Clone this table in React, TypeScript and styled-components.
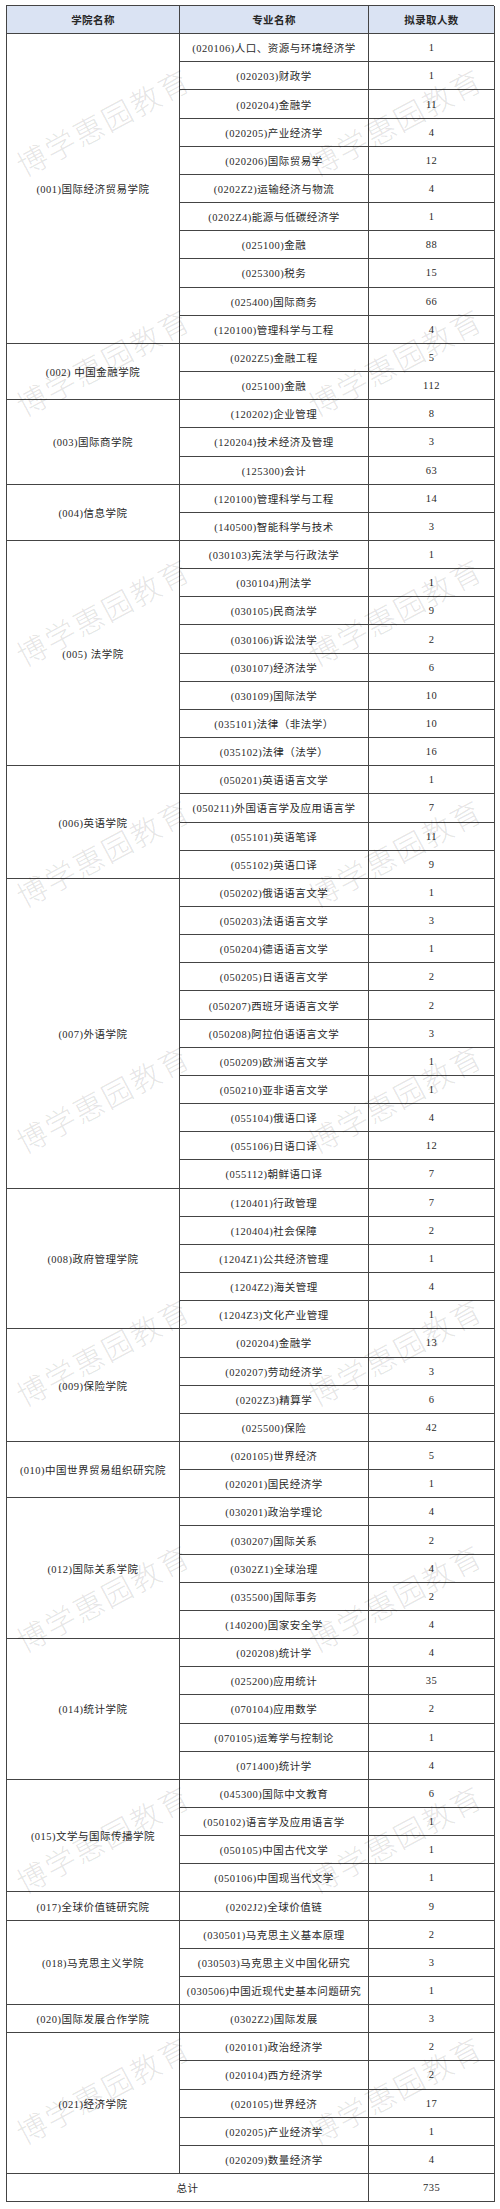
import React from 'react';
import styled, { createGlobalStyle } from 'styled-components';

const GlobalStyle = createGlobalStyle`
  html, body { margin: 0; padding: 0; background: #ffffff; }
  body { font-family: "Liberation Serif", "Noto Sans CJK SC", serif; }
`;

const Page = styled.div`
  padding: 5px 6px 0 6px;
  width: 500px;
  box-sizing: border-box;
`;

const Frame = styled.div`
  position: relative;
`;

const Grid = styled.div`
  display: grid;
  grid-template-columns: 173px 189px 126px;
  grid-auto-rows: 28.16px;
  border-top: 1px solid #444444;
  border-left: 1px solid #444444;
`;

const Cell = styled.div<{ $rows?: number; $cols?: number }>`
  grid-row: span ${(p) => p.$rows ?? 1};
  grid-column: span ${(p) => p.$cols ?? 1};
  box-sizing: border-box;
  border-right: 1px solid #444444;
  border-bottom: 1px solid #444444;
  display: flex;
  align-items: center;
  justify-content: center;
  font-family: "Liberation Serif", "Noto Sans CJK SC", serif;
  font-size: 10.5px;
  letter-spacing: 0.5px;
  color: #2a2a2a;
  white-space: nowrap;
`;

const HeadCell = styled(Cell)`
  background: #dae3f3;
  font-family: "Noto Sans CJK SC", sans-serif;
  font-weight: 700;
  color: #262626;
  letter-spacing: 0.4px;
`;

const Overlay = styled.div`
  position: absolute;
  inset: 0;
  pointer-events: none;
  overflow: hidden;
`;

const Watermark = styled.div<{ $x: number; $y: number }>`
  position: absolute;
  left: ${(p) => p.$x}px;
  top: ${(p) => p.$y}px;
  transform: translate(-50%, -50%) rotate(-28deg);
  font-family: "Noto Sans CJK SC", sans-serif;
  font-weight: 300;
  font-size: 30px;
  letter-spacing: 2px;
  color: rgba(0, 0, 0, 0.11);
  white-space: nowrap;
`;

type Major = [string, number];
interface Group {
  college: string;
  majors: Major[];
}

const groups: Group[] = [
  {
    college: '(001)国际经济贸易学院',
    majors: [
      ['(020106)人口、资源与环境经济学', 1],
      ['(020203)财政学', 1],
      ['(020204)金融学', 11],
      ['(020205)产业经济学', 4],
      ['(020206)国际贸易学', 12],
      ['(0202Z2)运输经济与物流', 4],
      ['(0202Z4)能源与低碳经济学', 1],
      ['(025100)金融', 88],
      ['(025300)税务', 15],
      ['(025400)国际商务', 66],
      ['(120100)管理科学与工程', 4],
    ],
  },
  {
    college: '(002) 中国金融学院',
    majors: [
      ['(0202Z5)金融工程', 5],
      ['(025100)金融', 112],
    ],
  },
  {
    college: '(003)国际商学院',
    majors: [
      ['(120202)企业管理', 8],
      ['(120204)技术经济及管理', 3],
      ['(125300)会计', 63],
    ],
  },
  {
    college: '(004)信息学院',
    majors: [
      ['(120100)管理科学与工程', 14],
      ['(140500)智能科学与技术', 3],
    ],
  },
  {
    college: '(005) 法学院',
    majors: [
      ['(030103)宪法学与行政法学', 1],
      ['(030104)刑法学', 1],
      ['(030105)民商法学', 9],
      ['(030106)诉讼法学', 2],
      ['(030107)经济法学', 6],
      ['(030109)国际法学', 10],
      ['(035101)法律（非法学）', 10],
      ['(035102)法律（法学）', 16],
    ],
  },
  {
    college: '(006)英语学院',
    majors: [
      ['(050201)英语语言文学', 1],
      ['(050211)外国语言学及应用语言学', 7],
      ['(055101)英语笔译', 11],
      ['(055102)英语口译', 9],
    ],
  },
  {
    college: '(007)外语学院',
    majors: [
      ['(050202)俄语语言文学', 1],
      ['(050203)法语语言文学', 3],
      ['(050204)德语语言文学', 1],
      ['(050205)日语语言文学', 2],
      ['(050207)西班牙语语言文学', 2],
      ['(050208)阿拉伯语语言文学', 3],
      ['(050209)欧洲语言文学', 1],
      ['(050210)亚非语言文学', 1],
      ['(055104)俄语口译', 4],
      ['(055106)日语口译', 12],
      ['(055112)朝鲜语口译', 7],
    ],
  },
  {
    college: '(008)政府管理学院',
    majors: [
      ['(120401)行政管理', 7],
      ['(120404)社会保障', 2],
      ['(1204Z1)公共经济管理', 1],
      ['(1204Z2)海关管理', 4],
      ['(1204Z3)文化产业管理', 1],
    ],
  },
  {
    college: '(009)保险学院',
    majors: [
      ['(020204)金融学', 13],
      ['(020207)劳动经济学', 3],
      ['(0202Z3)精算学', 6],
      ['(025500)保险', 42],
    ],
  },
  {
    college: '(010)中国世界贸易组织研究院',
    majors: [
      ['(020105)世界经济', 5],
      ['(020201)国民经济学', 1],
    ],
  },
  {
    college: '(012)国际关系学院',
    majors: [
      ['(030201)政治学理论', 4],
      ['(030207)国际关系', 2],
      ['(0302Z1)全球治理', 4],
      ['(035500)国际事务', 2],
      ['(140200)国家安全学', 4],
    ],
  },
  {
    college: '(014)统计学院',
    majors: [
      ['(020208)统计学', 4],
      ['(025200)应用统计', 35],
      ['(070104)应用数学', 2],
      ['(070105)运筹学与控制论', 1],
      ['(071400)统计学', 4],
    ],
  },
  {
    college: '(015)文学与国际传播学院',
    majors: [
      ['(045300)国际中文教育', 6],
      ['(050102)语言学及应用语言学', 1],
      ['(050105)中国古代文学', 1],
      ['(050106)中国现当代文学', 1],
    ],
  },
  {
    college: '(017)全球价值链研究院',
    majors: [['(0202J2)全球价值链', 9]],
  },
  {
    college: '(018)马克思主义学院',
    majors: [
      ['(030501)马克思主义基本原理', 2],
      ['(030503)马克思主义中国化研究', 3],
      ['(030506)中国近现代史基本问题研究', 1],
    ],
  },
  {
    college: '(020)国际发展合作学院',
    majors: [['(0302Z2)国际发展', 3]],
  },
  {
    college: '(021)经济学院',
    majors: [
      ['(020101)政治经济学', 2],
      ['(020104)西方经济学', 2],
      ['(020105)世界经济', 17],
      ['(020205)产业经济学', 1],
      ['(020209)数量经济学', 4],
    ],
  },
];

const watermarkRows = [116, 356, 606, 847, 1093, 1346, 1592, 1833, 2084];
const watermarkCols = [97, 389];

export default function App() {
  const total = groups.reduce(
    (sum, g) => sum + g.majors.reduce((s, m) => s + m[1], 0),
    0
  );
  return (
    <>
      <GlobalStyle />
      <Page>
        <Frame>
          <Grid>
            <HeadCell>学院名称</HeadCell>
            <HeadCell>专业名称</HeadCell>
            <HeadCell>拟录取人数</HeadCell>
            {groups.map((g) => (
              <React.Fragment key={g.college}>
                <Cell $rows={g.majors.length}>{g.college}</Cell>
                {g.majors.map(([name, count]) => (
                  <React.Fragment key={g.college + name}>
                    <Cell>{name}</Cell>
                    <Cell>{count}</Cell>
                  </React.Fragment>
                ))}
              </React.Fragment>
            ))}
            <Cell $cols={2}>总计</Cell>
            <Cell>{total}</Cell>
          </Grid>
          <Overlay>
            {watermarkRows.map((y) =>
              watermarkCols.map((x) => (
                <Watermark key={`${x}-${y}`} $x={x} $y={y}>
                  博学惠园教育
                </Watermark>
              ))
            )}
          </Overlay>
        </Frame>
      </Page>
    </>
  );
}
